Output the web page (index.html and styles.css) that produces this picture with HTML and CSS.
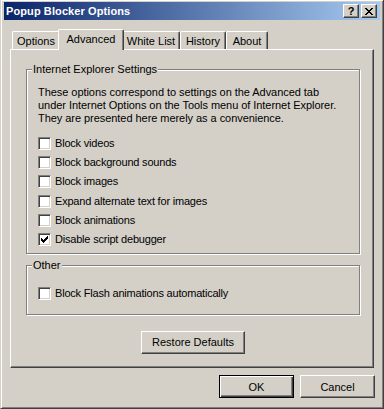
FILE: index.html
```html
<!DOCTYPE html>
<html>
<head>
<meta charset="utf-8">
<title>Popup Blocker Options</title>
<link rel="stylesheet" href="styles.css">
</head>
<body>
<div class="window">
  <div class="titlebar">
    <span class="title">Popup Blocker Options</span>
    <div class="caption-btns">
      <div class="cap-btn help">?</div>
      <div class="cap-btn close">
        <svg width="8" height="7" viewBox="0 0 8 7"><path fill="#000" d="M0 0h2v1h-2zM6 0h2v1h-2zM1 1h2v1h-2zM5 1h2v1h-2zM2 2h4v1h-4zM3 3h2v1h-2zM2 4h4v1h-4zM1 5h2v1h-2zM5 5h2v1h-2zM0 6h2v1h-2zM6 6h2v1h-2z"/></svg>
      </div>
    </div>
  </div>

  <div class="tabs">
    <div class="tab tab-options">Options</div>
    <div class="tab tab-advanced active">Advanced</div>
    <div class="tab tab-whitelist">White List</div>
    <div class="tab tab-history">History</div>
    <div class="tab tab-about">About</div>
  </div>

  <div class="panel">
    <fieldset class="group">
      <legend>Internet Explorer Settings</legend>
      <div class="group-body">
        <p class="note">These options correspond to settings on the Advanced tab<br>under Internet Options on the Tools menu of Internet Explorer.<br>They are presented here merely as a convenience.</p>
        <div class="checks">
          <div class="check"><span class="box"></span><span class="label">Block videos</span></div>
          <div class="check"><span class="box"></span><span class="label">Block background sounds</span></div>
          <div class="check"><span class="box"></span><span class="label">Block images</span></div>
          <div class="check"><span class="box"></span><span class="label">Expand alternate text for images</span></div>
          <div class="check"><span class="box"></span><span class="label">Block animations</span></div>
          <div class="check"><span class="box"><svg width="7" height="7" viewBox="0 0 7 7"><path fill="#000" d="M6 0h1v1h-1zM5 1h2v1h-2zM0 2h1v1h-1zM4 2h3v1h-3zM0 3h2v1h-2zM3 3h3v1h-3zM0 4h5v1h-5zM1 5h3v1h-3zM2 6h1v1h-1z"/></svg></span><span class="label">Disable script debugger</span></div>
        </div>
      </div>
    </fieldset>

    <fieldset class="group group-other">
      <legend>Other</legend>
      <div class="group-body other-body">
        <div class="check"><span class="box"></span><span class="label">Block Flash animations automatically</span></div>
      </div>
    </fieldset>

    <div class="restore-row">
      <button class="btn restore">Restore Defaults</button>
    </div>
  </div>

  <div class="footer">
    <button class="btn default">OK</button>
    <button class="btn">Cancel</button>
  </div>
</div>
</body>
</html>
```

FILE: styles.css
```css
html, body {
  margin: 0;
  padding: 0;
  background: #D4D0C8;
}
body {
  width: 384px;
  height: 409px;
  overflow: hidden;
  font-family: "Liberation Sans", Arial, sans-serif;
  font-size: 11px;
  color: #000;
}
.window {
  box-sizing: border-box;
  width: 384px;
  height: 409px;
  display: flex;
  flex-direction: column;
  border-left: 1px solid #D4D0C8;
  border-right: 1px solid #404040;
  border-bottom: 1px solid #404040;
  box-shadow: inset 1px 1px #fff, inset -1px -1px #808080;
  padding: 2px 3px 3px 3px;
}
.titlebar {
  height: 18px;
  flex: none;
  display: flex;
  align-items: center;
  background: linear-gradient(to right, #0A246A, #A6CAF0);
  color: #fff;
  font-weight: bold;
  padding-left: 2px;
}
.title {
  flex: 1;
  line-height: 13px;
  letter-spacing: 0.1px;
}
.caption-btns {
  display: flex;
  gap: 2px;
  margin-right: 3px;
}
.cap-btn {
  box-sizing: border-box;
  width: 16px;
  height: 14px;
  background: #D4D0C8;
  border: 1px solid;
  border-color: #fff #404040 #404040 #fff;
  box-shadow: inset -1px -1px #808080;
  display: flex;
  align-items: center;
  justify-content: center;
  color: #000;
  font-weight: bold;
  font-size: 11px;
  line-height: 11px;
}
.cap-btn svg { display: block; }

.tabs {
  display: flex;
  align-items: flex-end;
  height: 20px;
  margin: 9px 0 0 8px;
  flex: none;
}
.tab {
  box-sizing: border-box;
  height: 18px;
  border-top: 1px solid #fff;
  border-left: 1px solid #fff;
  border-right: 1px solid #404040;
  box-shadow: inset -1px 0 #808080;
  border-radius: 2px 2px 0 0;
  display: flex;
  align-items: center;
  justify-content: center;
  padding-top: 1px;
  background: #D4D0C8;
}
.tab-options { width: 48px; }
.tab-advanced { width: 62px; }
.tab-whitelist { width: 58px; }
.tab-history { width: 46px; }
.tab-about { width: 42px; }
.tab.active {
  height: 21px;
  width: 66px;
  margin: 0 -2px -1px;
  position: relative;
  z-index: 1;
  padding-top: 0;
  padding-bottom: 3px;
}

.panel {
  box-sizing: border-box;
  flex: none;
  margin-left: 6px;
  width: 364px;
  height: 319px;
  border: 1px solid;
  border-color: #fff #404040 #404040 #fff;
  box-shadow: inset -1px -1px #808080;
  padding: 13px 13px 0 15px;
  display: flex;
  flex-direction: column;
}
.group {
  margin: 0;
  padding: 0;
  min-width: 0;
  border: 1px solid #808080;
  box-shadow: inset 1px 1px #fff, 1px 1px #fff;
}
.group legend {
  margin-left: 5px;
  padding: 0 1px;
  line-height: 13px;
  background: #D4D0C8;
}
.group-other { margin-top: 5px; }
.group-body {
  padding: 10px 0 7px 11px;
}
.other-body {
  padding: 15px 0 14px 11px;
}
.note {
  margin: 0 0 12px;
  line-height: 13px;
  letter-spacing: -0.05px;
}
.checks {
  display: flex;
  flex-direction: column;
  gap: 6.2px;
}
.check {
  display: flex;
  align-items: center;
  gap: 4px;
  height: 13px;
  line-height: 13px;
}
.label { letter-spacing: -0.2px; }
.box {
  box-sizing: border-box;
  flex: none;
  width: 13px;
  height: 13px;
  border: 1px solid;
  border-color: #808080 #fff #fff #808080;
  box-shadow: inset 1px 1px #404040, inset -1px -1px #D4D0C8;
  background: #fff;
  display: flex;
  align-items: center;
  justify-content: center;
}
.box svg { display: block; }

.restore-row {
  display: flex;
  justify-content: center;
  margin-top: 16px;
}
.btn {
  box-sizing: border-box;
  height: 23px;
  width: 75px;
  padding: 0;
  margin: 0;
  font: inherit;
  color: #000;
  background: #D4D0C8;
  border: 1px solid;
  border-color: #fff #404040 #404040 #fff;
  box-shadow: inset -1px -1px #808080;
  border-radius: 0;
}
.btn.restore { width: 104px; }
.btn.default {
  border-color: #000;
  box-shadow: inset 1px 1px #fff, inset -1px -1px #404040, inset -2px -2px #808080;
}
.footer {
  display: flex;
  justify-content: flex-end;
  gap: 6px;
  margin: 7px 5px 0 0;
}
```
